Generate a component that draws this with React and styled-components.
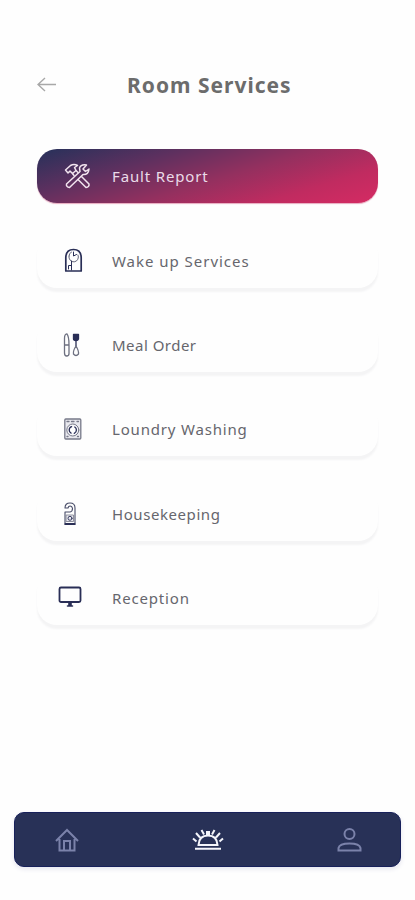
import React from "react";
import styled, { createGlobalStyle } from "styled-components";

const GlobalStyle = createGlobalStyle`
  * { box-sizing: border-box; }
  body { margin: 0; background: #fefefe; font-family: "Noto Sans", sans-serif; }
  button { font: inherit; border: 0; padding: 0; background: none; cursor: pointer; }
`;

const Screen = styled.div`
  width: 415px;
  height: 900px;
  display: flex;
  flex-direction: column;
  background: #fefefe;
  overflow: hidden;
`;

const Header = styled.header`
  display: flex;
  align-items: center;
  height: 40px;
  margin-top: 65px;
  padding-left: 37px;
`;

const BackButton = styled.button`
  display: flex;
  width: 90px;
`;

const Title = styled.h1`
  margin: 0;
  color: #6c6c6c;
  font-size: 21px;
  line-height: 40px;
  font-weight: 700;
  letter-spacing: 1px;
  white-space: nowrap;
`;

const ServiceList = styled.main`
  display: flex;
  flex-direction: column;
  gap: 30.2px;
  flex: 1;
  padding: 44px 37px 0;
`;

const ServiceCard = styled.button`
  display: flex;
  align-items: center;
  height: 54px;
  margin-bottom: ${(p) => (p.$active ? "0.8px" : "0")};
  padding-left: 21px;
  border-radius: 20px;
  color: ${(p) => (p.$active ? "#eadbe8" : "#66666d")};
  background: ${(p) => (p.$active ? "linear-gradient(163deg, #26315a 0%, #5d305f 28%, #94305f 54%, #c02b60 78%, #d52b63 100%)" : "#fefefe")};
  box-shadow: ${(p) => (p.$active ? "0 1px 1px #c52a6066" : "0 4px 2px #f4f4f5")};
  text-align: left;
`;

const ServiceIcon = styled.svg`
  width: 54px;
  height: 40px;
  flex: none;
  fill: none;
  stroke: ${(p) => (p.$active ? "#f2e4ef" : "#292e56")};
  stroke-width: 1.3;
  stroke-linecap: round;
  stroke-linejoin: round;
`;

const Label = styled.span`
  font-size: 15px;
  line-height: 20px;
  letter-spacing: ${(p) => p.$tracking}px;
  white-space: nowrap;
`;

const NavBar = styled.nav`
  display: flex;
  align-items: center;
  justify-content: space-between;
  height: 55px;
  margin: 0 14px 33px;
  padding: 0 38px 0 39px;
  border: 1px solid #17205a;
  border-radius: 10px;
  background: #283157;
  box-shadow: 0 2px 5px #e4e4ee;
`;

const NavButton = styled.button`
  display: flex;
  color: ${(p) => (p.$active ? "#f4f5fb" : "#7b82aa")};
`;

const NavIcon = styled.svg`
  width: ${(p) => p.$width}px;
  height: 28px;
  fill: none;
  stroke: currentColor;
  stroke-width: 2;
`;

const services = [
  {
    label: "Fault Report", tracking: 0.85, active: true,
    icon: (
      <g strokeWidth="1.5">
        <path d="M28.500 9 Q23 8 21.500 12 L22 15.500 L8.500 28 Q8 31 11.500 31.500 L25 18.500 Q30.500 19 31 13 L27.500 15.500 L25 13 Z" />
        <path d="M7.500 14 L12.500 9.500 Q16 7.500 19.500 9.500 L16.500 11.500 L18 14.500 L14.500 17.500 L12 15 L10 17 Z" />
        <path d="M18 14.500 L20 16.500 M23.500 20.500 L31 28 Q31.500 31 28 31.500 L20 23.500 M14.500 17.500 L16 19.500" />
      </g>
    ),
  },
  {
    label: "Wake up Services", tracking: 0.97,
    icon: (
      <>
        <path d="M7.800 30 V16.500 Q8 8.500 15.500 8.500 T23.200 16.500 V30 Z" strokeWidth="1.7" />
        <path d="M11 15 A4.800 4.800 0 1 0 20 14 M11 15 Q11 12 13.500 11" strokeWidth="1" stroke="#65677b" />
        <path d="M15.500 11 V15 L18.500 13.500 M13.500 20 V29 M13.500 24.500 H10.500 V28" strokeWidth="1" />
      </>
    ),
  },
  {
    label: "Meal Order", tracking: 0.48,
    icon: (
      <g stroke="#6d7080">
        <path d="M6.500 20 V13.500 Q6.500 9 8.800 8.800 Q11 11 11 20 Z M6.500 20 H11 V28.500 Q11 31 8.700 31 Q6.500 31 6.500 28 Z" />
        <path d="M15.500 9.500 H20.500 V14 Q20 15.500 18 15.500 Q15.500 15.500 15.500 14 Z" fill="#292e56" stroke="#292e56" />
        <path d="M18 16 V21" stroke="#292e56" />
        <path d="M18 21 Q14.800 26 15.500 29 Q18 32 20.500 29 Q21 26 18 21" />
      </g>
    ),
  },
  {
    label: "Loundry Washing", tracking: 0.82,
    icon: (
      <g stroke="#777989">
        <rect x="6.800" y="10" width="16" height="20" rx="1" fill="#e8e8ee" />
        <circle cx="14.800" cy="21" r="6" strokeWidth="1" fill="#f6f6f9" />
        <circle cx="14.800" cy="21" r="3.600" fill="#fff" stroke="#292e56" strokeDasharray="8 3.300" strokeDashoffset="4" />
        <path d="M9 12.500 H11 M13.500 12.500 H16 M19 12.500 H20.500 M9 27.500 H10 M19.500 27.500 H20.500" />
      </g>
    ),
  },
  {
    label: "Housekeeping", tracking: 0.57,
    icon: (
      <>
        <path d="M7 14 Q7 9 12 9 Q17 9 17 14 V30.500 H7 V18 H12 Q14.500 17.500 14.500 14.500 Q14 12 12 12 Q10.500 12 10 14 Z" strokeWidth="1.100" stroke="#484c68" />
        <rect x="8.500" y="21" width="7" height="6.500" fill="#e8e8ee" stroke="#777989" strokeWidth=".8" />
        <path d="M7.500 30 H16.500" strokeWidth="2" />
        <circle cx="12" cy="24.300" r="2" strokeWidth=".9" />
      </>
    ),
  },
  {
    label: "Reception", tracking: 0.83,
    icon: (
      <>
        <rect x="1.500" y="9.500" width="21" height="14.500" rx="1.500" strokeWidth="1.800" />
        <path d="M9.500 28 H14.500 M11 24.500 H13 V28 H11 Z" fill="#292e56" strokeWidth="1.600" />
      </>
    ),
  },
];

const BackIcon = styled.svg`
  width: 20px;
  height: 16px;
  fill: none;
  stroke: #a8a8a8;
  stroke-width: 1.4;
`;

export default function App() {
  return (
    <Screen>
      <GlobalStyle />
      <Header>
        <BackButton aria-label="Back">
          <BackIcon viewBox="0 0 20 16"><path d="M19 7.500 H1.500 M8 1 L1 7.500 L8 14" /></BackIcon>
        </BackButton>
        <Title>Room Services</Title>
      </Header>
      <ServiceList>
        {services.map(({ label, tracking, active, icon }) => (
          <ServiceCard key={label} $active={active}>
            <ServiceIcon viewBox="0 0 54 40" $active={active}>{icon}</ServiceIcon>
            <Label $tracking={tracking}>{label}</Label>
          </ServiceCard>
        ))}
      </ServiceList>
      <NavBar>
        <NavButton aria-label="Home">
          <NavIcon $width={26} viewBox="0 0 26 28">
            <path d="M2 15 L13 4 L24 15 M5.500 13 V24.500 H20.500 V13 M10 24 V15 H16 V24" />
          </NavIcon>
        </NavButton>
        <NavButton aria-label="Services" $active>
          <NavIcon $width={32} viewBox="0 0 32 28">
            <path d="M6.500 19 Q7 9.500 16 9.500 T25.500 19 Z M3 22.800 H29 M1 12.500 L4.500 15.500 M4 7 L8 11.500 M9.500 4 L12 8.500 M22.500 4 L20 8.500 M28 7 L24 11.500 M31 12.500 L27.500 15.500" />
            <rect x="14" y="5" width="4" height="4.500" fill="currentColor" stroke="none" />
          </NavIcon>
        </NavButton>
        <NavButton aria-label="Profile">
          <NavIcon $width={26} viewBox="0 0 26 28">
            <circle cx="13.500" cy="8" r="5" />
            <path d="M2.500 24.500 V22 Q3.500 17.500 13.500 17.500 T24.500 22 V24.500 Z" />
          </NavIcon>
        </NavButton>
      </NavBar>
    </Screen>
  );
}
